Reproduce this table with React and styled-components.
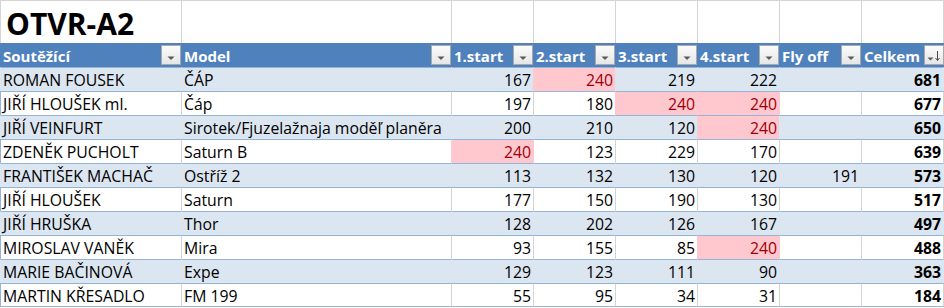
import React from 'react';
import styled, { createGlobalStyle } from 'styled-components';

const GlobalStyle = createGlobalStyle`
  html, body { margin: 0; padding: 0; background: #ffffff; }
  body { font-family: "Open Sans", "Noto Sans", sans-serif; color: #000; }
`;

const BLUE = '#4f81bd';
const BAND = '#dce6f1';
const LINE = '#95b3d7';
const GRID = '#d4d4d4';
const PINK = '#ffc7ce';
const PINK_TEXT = '#9c0006';

const COLS = '181px 270px 82px 82px 82px 82px 82px 83px';

const Sheet = styled.div`
  width: 944px;
  display: flex;
  flex-direction: column;
`;

const Row = styled.div`
  display: grid;
  grid-template-columns: ${COLS};
`;

const TitleCell = styled.div`
  height: 43px;
  box-sizing: border-box;
  border-top: 1px solid ${GRID};
  border-left: 1px solid ${GRID};
  border-right: ${(p) => (p.$last ? `1px solid ${GRID}` : 'none')};
  padding: 4px 0 0 5px;
  font-size: 30px;
  font-weight: 700;
  line-height: 38px;
  white-space: nowrap;
`;

const HeaderCell = styled.div`
  height: 24px;
  box-sizing: border-box;
  background: ${BLUE};
  display: flex;
  align-items: center;
  padding-left: 3px;
  color: #ffffff;
  font-size: 15px;
  font-weight: 700;
  white-space: nowrap;
`;

const HeaderLabel = styled.span`
  padding-top: 2px;
  line-height: 20px;
`;

const FilterButton = styled.span`
  margin-left: auto;
  width: 20px;
  height: 20px;
  box-sizing: border-box;
  border: 1px solid #a9a9a9;
  background: linear-gradient(#fbfbfb, #e6e6e6);
  display: flex;
  align-items: center;
  justify-content: center;
  & svg { display: block; }
`;

const DataCell = styled.div`
  height: 24px;
  box-sizing: border-box;
  border-top: 1px solid ${LINE};
  border-bottom: ${(p) => (p.$lastRow ? `1px solid ${LINE}` : 'none')};
  border-left: 1px solid ${(p) => p.$leftColor};
  border-right: ${(p) => (p.$last ? `1px solid ${p.$rightColor}` : 'none')};
  background: ${(p) => p.$fill};
  color: ${(p) => (p.$pink ? PINK_TEXT : '#000000')};
  font-size: 15.8px;
  font-weight: ${(p) => (p.$bold ? 700 : 400)};
  line-height: 21px;
  padding: 2px 2px 0 2px;
  text-align: ${(p) => (p.$num ? 'right' : 'left')};
  white-space: nowrap;
  overflow: hidden;
`;

const headers = ['Soutěžící', 'Model', '1.start', '2.start', '3.start', '4.start', 'Fly off', 'Celkem'];

// [name, model, s1, s2, s3, s4, flyoff, total, pinkIndexes]
const rows = [
  ['ROMAN FOUSEK', 'ČÁP', 167, 240, 219, 222, '', 681, [3]],
  ['JIŘÍ HLOUŠEK ml.', 'Čáp', 197, 180, 240, 240, '', 677, [4, 5]],
  ['JIŘÍ VEINFURT', 'Sirotek/Fjuzelažnaja moděľ planěra', 200, 210, 120, 240, '', 650, [5]],
  ['ZDENĚK PUCHOLT', 'Saturn B', 240, 123, 229, 170, '', 639, [2]],
  ['FRANTIŠEK MACHAČ', 'Ostříž 2', 113, 132, 130, 120, 191, 573, []],
  ['JIŘÍ HLOUŠEK', 'Saturn', 177, 150, 190, 130, '', 517, []],
  ['JIŘÍ HRUŠKA', 'Thor', 128, 202, 126, 167, '', 497, []],
  ['MIROSLAV VANĚK', 'Mira', 93, 155, 85, 240, '', 488, [5]],
  ['MARIE BAČINOVÁ', 'Expe', 129, 123, 111, 90, '', 363, []],
  ['MARTIN KŘESADLO', 'FM 199', 55, 95, 34, 31, '', 184, []],
];

function FilterIcon() {
  return (
    <svg width="18" height="18" viewBox="0 0 18 18">
      <polygon points="5.5,10.5 12.5,10.5 9,14" fill="#5a5a5a" />
    </svg>
  );
}

function SortIcon() {
  return (
    <svg width="18" height="18" viewBox="0 0 18 18">
      <polygon points="2.5,11.5 8.5,11.5 5.5,14.5" fill="#5a5a5a" />
      <line x1="12.5" y1="5" x2="12.5" y2="14" stroke="#4a4a4a" strokeWidth="1" />
      <polyline points="10.5,12 12.5,14.5 14.5,12" fill="none" stroke="#4a4a4a" strokeWidth="1" />
    </svg>
  );
}

export default function App() {
  return (
    <>
      <GlobalStyle />
      <Sheet>
        <Row>
          {headers.map((_, i) => (
            <TitleCell key={i} $last={i === headers.length - 1}>
              {i === 0 ? 'OTVR-A2' : ''}
            </TitleCell>
          ))}
        </Row>
        <Row>
          {headers.map((h, i) => (
            <HeaderCell key={h}>
              <HeaderLabel>{h}</HeaderLabel>
              <FilterButton>{i === headers.length - 1 ? <SortIcon /> : <FilterIcon />}</FilterButton>
            </HeaderCell>
          ))}
        </Row>
        {rows.map((r, ri) => {
          const band = ri % 2 === 0;
          const pinks = r[8];
          const values = r.slice(0, 8);
          return (
            <Row key={ri}>
              {values.map((v, ci) => {
                const pink = pinks.includes(ci);
                const prevPink = pinks.includes(ci - 1);
                const fill = pink ? PINK : band ? BAND : '#ffffff';
                let leftColor;
                if (pink || band) leftColor = 'transparent';
                else if (prevPink) leftColor = PINK;
                else if (ci === 0) leftColor = LINE;
                else leftColor = GRID;
                return (
                  <DataCell
                    key={ci}
                    $fill={fill}
                    $leftColor={leftColor}
                    $rightColor={band ? BAND : GRID}
                    $last={ci === 7}
                    $lastRow={ri === rows.length - 1}
                    $pink={pink}
                    $num={ci >= 2}
                    $bold={ci === 7}
                  >
                    {v}
                  </DataCell>
                );
              })}
            </Row>
          );
        })}
      </Sheet>
    </>
  );
}
